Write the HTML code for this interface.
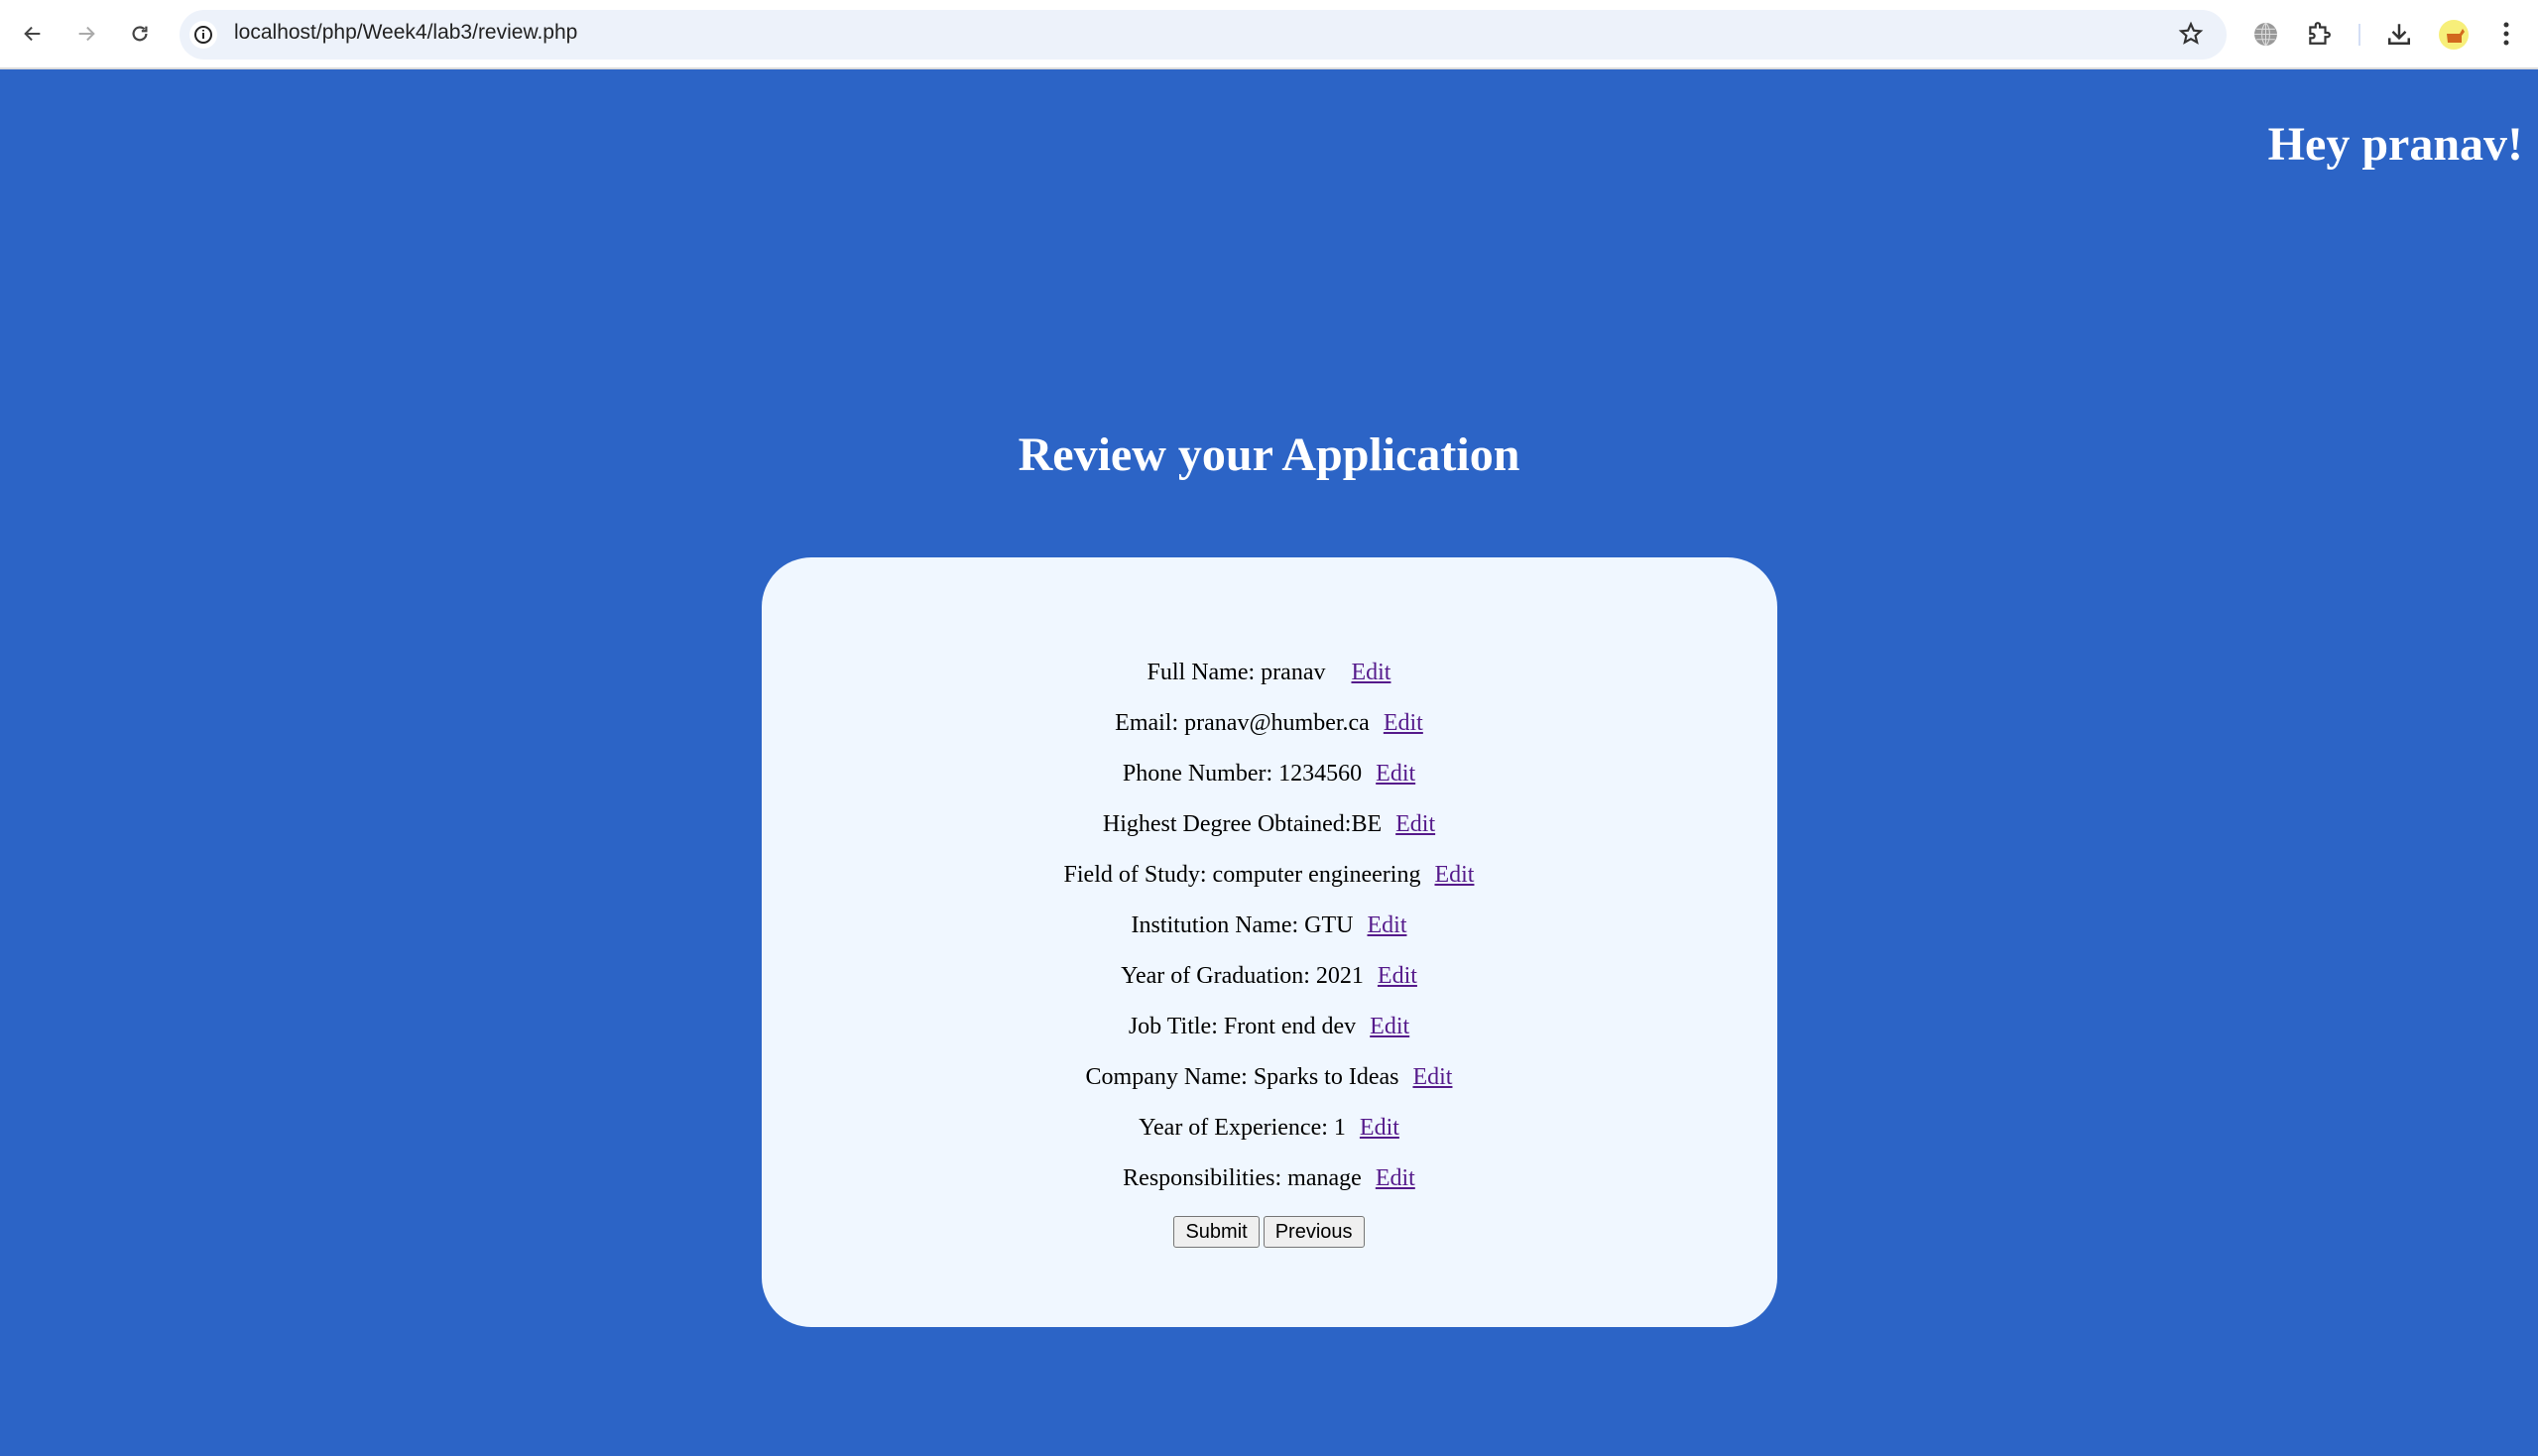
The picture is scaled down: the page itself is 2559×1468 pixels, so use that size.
<!DOCTYPE html>
<html><head><meta charset="utf-8"><style>
*{margin:0;padding:0;box-sizing:border-box}
html,body{width:2559px;height:1468px;overflow:hidden;background:#2c64c6;font-family:"Liberation Serif",serif}
.bar{position:absolute;left:0;top:0;width:2559px;height:70px;background:#fff;border-bottom:2px solid #dcdcdc}
.pill{position:absolute;left:181px;top:10px;width:2064px;height:50px;border-radius:25px;background:#edf2fa}
.url{position:absolute;left:236px;top:21px;font:21px "Liberation Sans",sans-serif;color:#222}
svg.i{position:absolute}
.hey{position:absolute;right:15px;top:118px;color:#fff;font-weight:bold;font-size:48px;line-height:56px}
.title{position:absolute;left:0;width:2559px;top:431px;text-align:center;color:#fff;font-weight:bold;font-size:48px;line-height:56px}
.card{position:absolute;left:768px;top:562px;width:1024px;height:776px;background:#f0f7ff;border-radius:50px}
.rows{position:absolute;left:0;width:2559px;top:653px;text-align:center;font-size:24px;color:#000}
.rows div{height:51px;line-height:51px}
.rows a{color:#551a8b;text-decoration:underline;margin-left:8px}
.btns{position:absolute;left:0;width:2559px;top:1226px;text-align:center}
button{font:20px "Liberation Sans",sans-serif;height:32px;background:#efefef;border:1.5px solid #767676;border-radius:3px;color:#000;padding:0 11px;margin:0 2px}
</style></head><body>
<div class="bar">
<svg class="i" style="left:22px;top:23px" width="22" height="22" viewBox="0 0 24 24"><path d="M20 12H5M11 5l-7 7 7 7" stroke="#444" stroke-width="2.2" fill="none"/></svg>
<svg class="i" style="left:76px;top:23px" width="22" height="22" viewBox="0 0 24 24"><path d="M4 12h15M13 5l7 7-7 7" stroke="#aaa" stroke-width="2.2" fill="none"/></svg>
<svg class="i" style="left:130px;top:23px" width="22" height="22" viewBox="0 0 24 24"><path d="M19 12a7 7 0 1 1-2-5M19 4v5h-5" stroke="#444" stroke-width="2.4" fill="none"/></svg>
<div class="pill"></div>
<svg class="i" style="left:191px;top:21px" width="28" height="28" viewBox="0 0 28 28"><circle cx="14" cy="14" r="14" fill="#fff"/><circle cx="14" cy="14" r="8" stroke="#222" stroke-width="2" fill="none"/><path d="M14 12v6M14 9v1.5" stroke="#222" stroke-width="2"/></svg>
<div class="url">localhost/php/Week4/lab3/review.php</div>
<svg class="i" style="left:2196px;top:21px" width="26" height="26" viewBox="0 0 24 24"><path d="M12 3l2.7 6 6.3.6-4.8 4.2 1.5 6.2L12 16.8 6.3 20l1.5-6.2L3 9.6l6.3-.6z" stroke="#333" stroke-width="2" fill="none"/></svg>
<svg class="i" style="left:2272px;top:22px" width="25" height="25" viewBox="0 0 24 24"><circle cx="12" cy="12" r="11" fill="#999"/><path d="M1 12h22M12 1v22M3 7h18M3 17h18M12 1c-5 5-5 17 0 22M12 1c5 5 5 17 0 22" stroke="#ddd" stroke-width="1" fill="none"/></svg>
<svg class="i" style="left:2325px;top:21px" width="26" height="26" viewBox="0 0 24 24"><path d="M4 6h5V4a2 2 0 0 1 4 0v2h5v5h2a2 2 0 0 1 0 4h-2v6H4v-5h2a2 2 0 0 0 0-4H4z" stroke="#333" stroke-width="2" fill="none"/></svg>
<div style="position:absolute;left:2378px;top:24px;width:2px;height:22px;background:#d3def5"></div>
<svg class="i" style="left:2406px;top:21px" width="26" height="26" viewBox="0 0 24 24"><path d="M12 3v12M6 10l6 6 6-6M3 16v5h18v-5" stroke="#333" stroke-width="2.3" fill="none"/></svg>
<svg class="i" style="left:2459px;top:20px" width="30" height="30" viewBox="0 0 30 30"><circle cx="15" cy="15" r="15" fill="#f7ef7a"/><path d="M8 14h13l3-5 2 3-3 4v7H9z" fill="#d2691e"/></svg>
<svg class="i" style="left:2520px;top:20px" width="14" height="28" viewBox="0 0 14 28"><circle cx="7" cy="5" r="2.5" fill="#333"/><circle cx="7" cy="14" r="2.5" fill="#333"/><circle cx="7" cy="23" r="2.5" fill="#333"/></svg>
</div>
<div class="hey">Hey pranav!</div>
<div class="title">Review your Application</div>
<div class="card"></div>
<div class="rows">
<div>Full Name: pranav &nbsp; <a>Edit</a></div>
<div>Email: pranav@humber.ca <a>Edit</a></div>
<div>Phone Number: 1234560 <a>Edit</a></div>
<div>Highest Degree Obtained:BE <a>Edit</a></div>
<div>Field of Study: computer engineering <a>Edit</a></div>
<div>Institution Name: GTU <a>Edit</a></div>
<div>Year of Graduation: 2021 <a>Edit</a></div>
<div>Job Title: Front end dev <a>Edit</a></div>
<div>Company Name: Sparks to Ideas <a>Edit</a></div>
<div>Year of Experience: 1 <a>Edit</a></div>
<div>Responsibilities: manage <a>Edit</a></div>
</div>
<div class="btns"><button>Submit</button><button>Previous</button></div>
</body></html>
